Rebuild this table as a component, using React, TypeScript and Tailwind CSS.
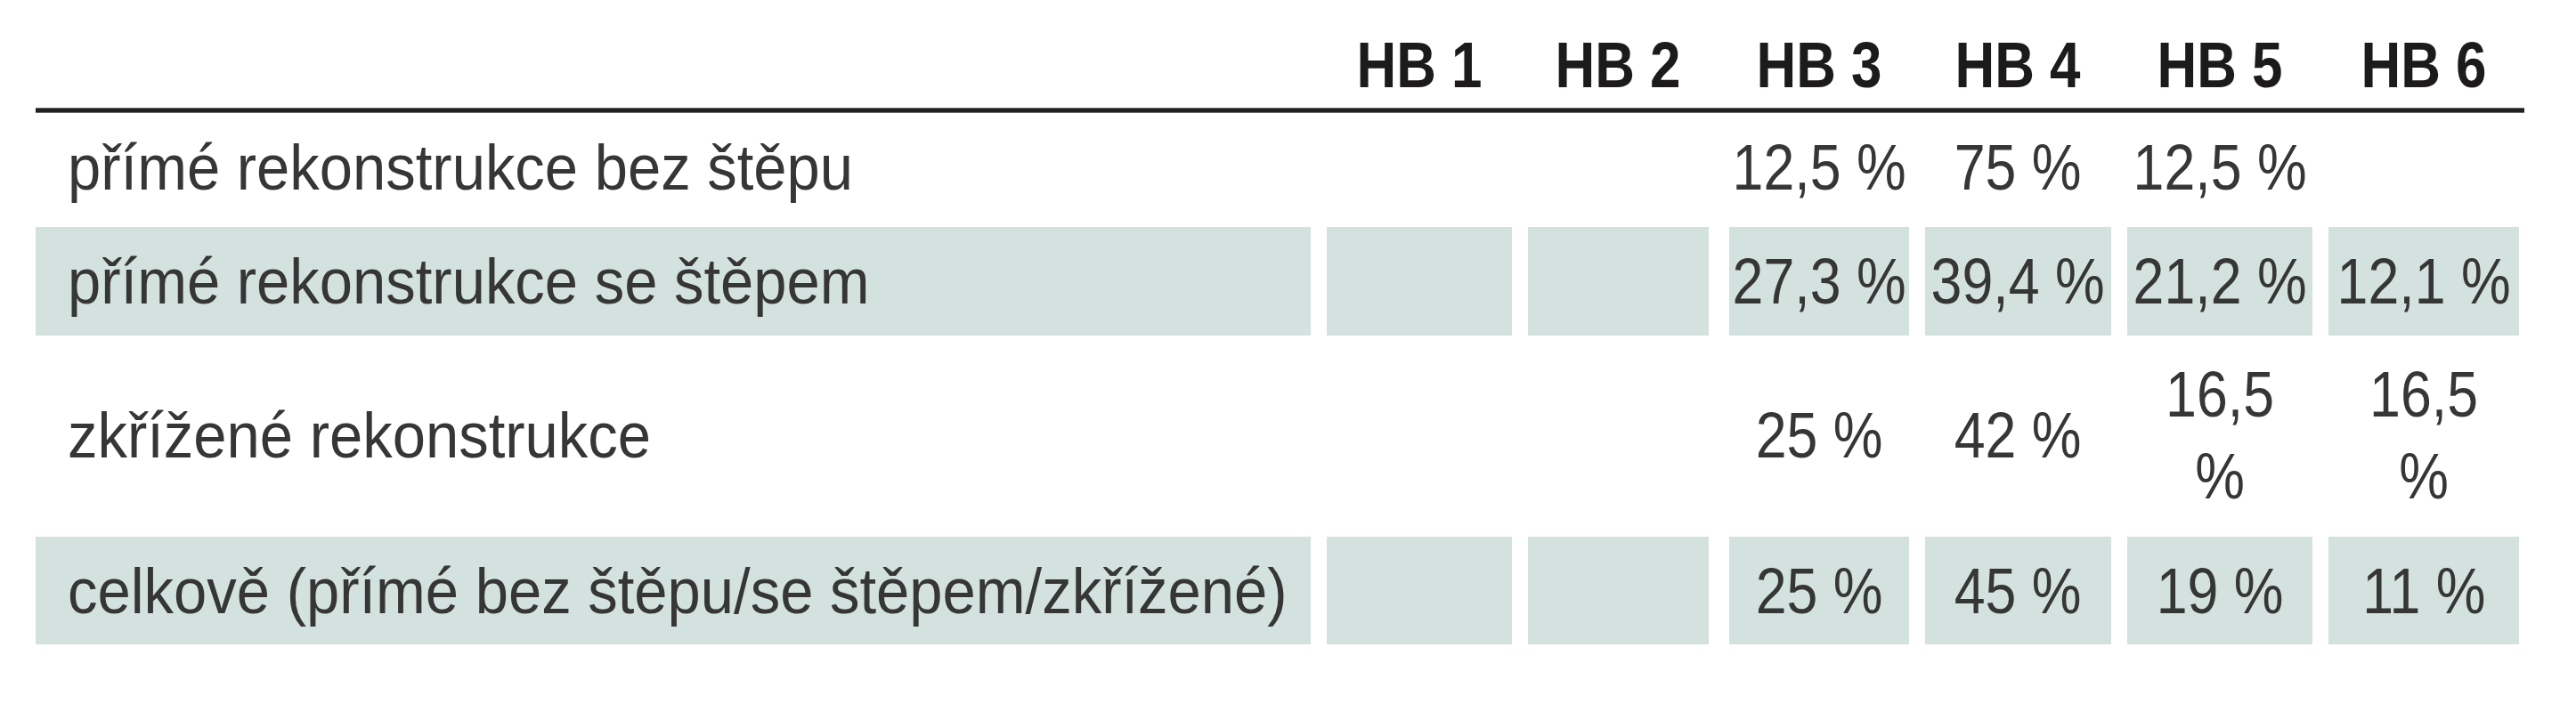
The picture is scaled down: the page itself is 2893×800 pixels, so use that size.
import React from "react";

const FONT = "font-['Liberation_Sans','Arial',sans-serif]";
const COLS = "grid grid-cols-[1432px_208px_203px_207px_209px_208px_214px] gap-x-[18px]";
const colCls = ["", "", "", "ml-[5px]", "", "", ""];

type Row = {
  label: string;
  values: React.ReactNode[];
  shaded: boolean;
  h: string;
};

const rows: Row[] = [
  {
    label: "přímé rekonstrukce bez štěpu",
    values: ["", "", "12,5 %", "75 %", "12,5 %", ""],
    shaded: false,
    h: "h-[128px] pb-[6px]",
  },
  {
    label: "přímé rekonstrukce se štěpem",
    values: ["", "", "27,3 %", "39,4 %", "21,2 %", "12,1 %"],
    shaded: true,
    h: "h-[122px]",
  },
  {
    label: "zkřížené rekonstrukce",
    values: [
      "",
      "",
      "25 %",
      "42 %",
      <>
        16,5
        <br />%
      </>,
      <>
        16,5
        <br />%
      </>,
    ],
    shaded: false,
    h: "h-[220px] pt-[4px]",
  },
  {
    label: "celkově (přímé bez štěpu/se štěpem/zkřížené)",
    values: ["", "", "25 %", "45 %", "19 %", "11 %"],
    shaded: true,
    h: "h-[127px] pt-[6px]",
  },
];

export default function App() {
  return (
    <div className={`w-[2893px] h-[800px] bg-white ${FONT}`}>
      <div className="ml-[40px] w-[2795px]">
        {/* header */}
        <div className={`${COLS} h-[121px]`}>
          {["", "HB 1", "HB 2", "HB 3", "HB 4", "HB 5", "HB 6"].map((t, i) => (
            <div
              key={i}
              className={`${colCls[i]} flex items-end justify-center pb-[12px] text-[72px] leading-[72px] font-bold text-[#1c1a1b] whitespace-nowrap`}
            >
              <span className="inline-block scale-x-[0.86] origin-center">{t}</span>
            </div>
          ))}
        </div>
        <div className="h-[6px] bg-[#231f20] border-y border-[#6a6a6a]" />
        {rows.map((r, ri) => (
          <div key={ri} className={`${COLS} ${r.h}`}>
            <div
              className={`${r.shaded ? "bg-[#d3e2de]" : ""} flex items-center pl-[36px] text-[72px] leading-[72px] text-[#363636] whitespace-nowrap`}
            >
              <span className="inline-block scale-x-[0.93] origin-left">{r.label}</span>
            </div>
            {r.values.map((v, vi) => (
              <div
                key={vi}
                className={`${colCls[vi + 1]} ${r.shaded ? "bg-[#d3e2de]" : ""} flex items-center justify-center text-center text-[72px] ${ri === 2 ? "leading-[92px]" : "leading-[72px]"} text-[#363636] whitespace-nowrap`}
              >
                <span className="inline-block scale-x-[0.87] origin-center">{v}</span>
              </div>
            ))}
          </div>
        ))}
      </div>
    </div>
  );
}
